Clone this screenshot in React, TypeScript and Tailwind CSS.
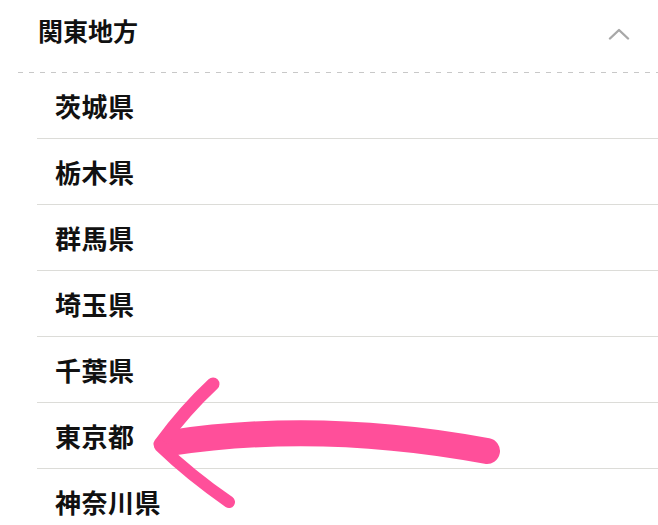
import React from "react";

const prefectures = ["茨城県", "栃木県", "群馬県", "埼玉県", "千葉県", "東京都", "神奈川県"];

export default function App() {
  return (
    <div
      className="relative w-[658px] h-[525px] overflow-hidden bg-white text-[#111]"
      style={{ fontFamily: '"Noto Sans CJK JP", "Noto Sans", sans-serif' }}
    >
      <div className="pl-[18px]">
        {/* Region header */}
        <div className="h-[72px] flex items-start justify-between pl-[20px] pr-[28px] pt-[18px]">
          <h2 className="text-[25px] leading-[25px] font-bold">関東地方</h2>
          <svg width="22" height="12" viewBox="0 0 22 12" className="mt-[10px]" fill="none">
            <path d="M2 10.5 L11 2 L20 10.5" stroke="#a8a8a8" strokeWidth="2.4" strokeLinecap="round" strokeLinejoin="round" />
          </svg>
        </div>
        <div className="h-px bg-[linear-gradient(to_right,#c8c8c8_5px,transparent_5px)] bg-[length:11px_1px]" />

        {/* Prefecture list */}
        <ul className="ml-[19px]">
          {prefectures.map((p) => (
            <li
              key={p}
              className="h-[66px] flex items-center pl-[18px] border-b border-[#dcdcd8] text-[26px] leading-[26px] font-bold tracking-[0.5px]"
            >
              {p}
            </li>
          ))}
        </ul>
      </div>

      {/* Hand-drawn annotation arrow */}
      <svg className="absolute inset-0 pointer-events-none" width="658" height="525" viewBox="0 0 658 525" fill="none">
        <path d="M170 443 Q320 420 487 451" stroke="#ff4f9a" strokeWidth="26" strokeLinecap="round" />
        <path d="M213 384 Q185 410 160 444" stroke="#ff4f9a" strokeWidth="13" strokeLinecap="round" />
        <path d="M160 446 Q190 475 229 502" stroke="#ff4f9a" strokeWidth="12" strokeLinecap="round" />
      </svg>
    </div>
  );
}
